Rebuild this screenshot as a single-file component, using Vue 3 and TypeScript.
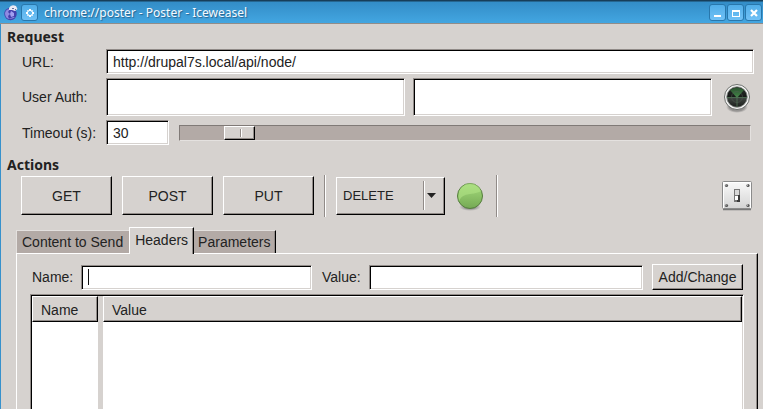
<script setup lang="ts">
import { ref } from 'vue'

const url = ref('http://drupal7s.local/api/node/')
const user = ref('')
const password = ref('')
const timeout = ref(30)
const method = ref('DELETE')
const headerName = ref('')
const headerValue = ref('')
const activeTab = ref('Headers')

const actions: string[] = ['GET', 'POST', 'PUT']
const tabs: string[] = ['Content to Send', 'Headers', 'Parameters']
</script>

<template>
  <div class="window">
    <header class="titlebar">
      <svg class="app-icon" width="14" height="16" viewBox="0 0 14 16" aria-hidden="true">
        <circle cx="6.5" cy="9" r="6.200" fill="#4440ac" />
        <path d="M1 8Q2 4 6 4L4 7L6 9L4 11L5 14Q1 13 1 8Z" fill="#8f8be2" />
        <path d="M7 6L10 8L10 11L7 12L6 9Z" fill="#a29ff0" />
        <path d="M4 13Q8 15 11 12L9 12L7 13Z" fill="#8985df" />
        <path d="M5 3Q7-1 12 1L13.500 4L11 6L8 5L5 5Z" fill="#e9eaf5" />
        <path d="M8 3h2v1H8zM11 4h1v1h-1z" fill="#65729c" />
      </svg>
      <button class="win-btn" aria-label="Window menu">
        <svg width="14" height="14" viewBox="0 0 14 14"><path d="M6 3h2v2H6zM6 9h2v2H6zM3 6h2v2H3zM9 6h2v2H9z" fill="#fff" /><path d="M4 4h2v2H4zM8 4h2v2H8zM4 8h2v2H4zM8 8h2v2H8z" fill="#fff" opacity=".7" /></svg>
      </button>
      <h1 class="title">chrome://poster - Poster - Iceweasel</h1>
      <div class="win-controls">
        <button class="win-btn" aria-label="Minimize">
          <svg width="14" height="14" viewBox="0 0 14 14"><path d="M3 9h7v2H3z" fill="#fff" /></svg>
        </button>
        <button class="win-btn" aria-label="Maximize">
          <svg width="14" height="14" viewBox="0 0 14 14"><path d="M3 4h8v7H3zM4 6v4h6V6z" fill="#fff" fill-rule="evenodd" /></svg>
        </button>
        <button class="win-btn" aria-label="Close">
          <svg width="14" height="14" viewBox="0 0 14 14"><path d="M4 4L10 10M10 4L4 10" stroke="#fff" stroke-width="2.2" /></svg>
        </button>
      </div>
    </header>

    <main class="content">
      <h2 class="heading">Request</h2>
      <form class="request" @submit.prevent>
        <div class="row url-row">
          <label class="label" for="url">URL:</label>
          <input id="url" v-model="url" class="field grow" type="text" />
        </div>
        <div class="row auth-row">
          <label class="label" for="user">User Auth:</label>
          <input id="user" v-model="user" class="field grow" type="text" />
          <input v-model="password" class="field grow" type="password" aria-label="Password" />
          <button class="icon-btn" type="button" aria-label="Fetch login">
            <svg width="32" height="34" viewBox="0 0 32 34">
              <defs>
                <radialGradient id="shade"><stop offset=".7" stop-color="#555" stop-opacity=".5" /><stop offset="1" stop-color="#777" stop-opacity="0" /></radialGradient>
                <linearGradient id="dial" x2="0" y2="1"><stop offset="0" stop-color="#2b302c" /><stop offset=".5" stop-color="#161917" /><stop offset=".55" stop-color="#3f4541" /><stop offset="1" stop-color="#1b1e1c" /></linearGradient>
                <linearGradient id="beam" x2="0" y2="1"><stop offset="0" stop-color="#2c5230" /><stop offset="1" stop-color="#438a48" /></linearGradient>
              </defs>
              <ellipse cx="16" cy="27" rx="11" ry="6" fill="url(#shade)" />
              <circle cx="16" cy="17" r="12.5" fill="#f5f5f5" stroke="#6d706d" />
              <circle cx="16" cy="17" r="10.3" fill="url(#dial)" stroke="#8b8f8b" stroke-width=".8" />
              <path d="M16 18L9 10Q16 5 23 10Z" fill="url(#beam)" />
              <path d="M6 17.500H26M16 15V27" stroke="#527858" opacity=".8" />
              <circle cx="16" cy="17" r="5.500" fill="none" stroke="#526155" stroke-width=".5" />
            </svg>
          </button>
        </div>
        <div class="row time-row">
          <label class="label" for="timeout">Timeout (s):</label>
          <input id="timeout" v-model.number="timeout" class="field timeout" type="text" />
          <input v-model.number="timeout" class="slider" type="range" min="1" max="360" aria-label="Timeout" />
        </div>
      </form>

      <h2 class="heading actions-heading">Actions</h2>
      <div class="toolbar">
        <button v-for="action in actions" :key="action" class="raised action">{{ action }}</button>
        <span class="separator"></span>
        <div class="method">
          <select v-model="method" class="raised method-select" aria-label="Method">
            <option>DELETE</option>
          </select>
          <span class="method-arrow" aria-hidden="true">
            <svg width="9" height="5" viewBox="0 0 9 5"><path d="M0 0H9L4.500 5Z" fill="#222" /></svg>
          </span>
        </div>
        <button class="icon-btn go" aria-label="Submit">
          <svg width="28" height="30" viewBox="0 0 28 30">
            <defs>
              <linearGradient id="green" x2="0" y2="1"><stop offset="0" stop-color="#a5dc7c" /><stop offset="1" stop-color="#75a954" /></linearGradient>
              <radialGradient id="drop"><stop offset=".5" stop-color="#666" stop-opacity=".6" /><stop offset="1" stop-color="#888" stop-opacity="0" /></radialGradient>
            </defs>
            <ellipse cx="14" cy="26" rx="11" ry="4" fill="url(#drop)" />
            <circle cx="14" cy="15" r="12.500" fill="url(#green)" stroke="#557d3d" />
            <path d="M3 20Q5 14 14 13Q22 12 25 10A11.500 11.500 0 0 0 3 11Q2 16 3 20Z" fill="#b0e386" opacity=".6" />
          </svg>
        </button>
        <span class="separator"></span>
        <button class="icon-btn settings" aria-label="Settings">
          <svg width="30" height="30" viewBox="0 0 30 30">
            <defs>
              <linearGradient id="plate" x2="0" y2="1"><stop offset="0" stop-color="#fafafa" /><stop offset="1" stop-color="#d4d4d4" /></linearGradient>
            </defs>
            <path d="M1 28.500H29" stroke="#777" stroke-width="1.500" />
            <rect x=".5" y=".5" width="29" height="27" rx="1" fill="url(#plate)" stroke="#8b8b8b" />
            <path d="M1.500 27V1.500H28.500V27" fill="none" stroke="#fff" />
            <g fill="#555"><circle cx="4.500" cy="4.500" r="1.600" /><circle cx="26" cy="4.500" r="1.600" /><circle cx="4.500" cy="24.500" r="1.600" /><circle cx="26" cy="24.500" r="1.600" /></g>
            <g fill="#fff"><circle cx="4" cy="4" r=".6" /><circle cx="25.500" cy="4" r=".6" /><circle cx="4" cy="24" r=".6" /><circle cx="25.500" cy="24" r=".6" /></g>
            <path d="M12 8H18V21H12Z" fill="#777" />
            <path d="M13 9H17V14H13Z" fill="#d8d8d8" />
            <path d="M13 15H16V19H13Z" fill="#fff" />
            <path d="M16 14H18V21H15V19H16Z" fill="#3a3a3a" />
          </svg>
        </button>
      </div>

      <div class="tabs" role="tablist">
        <button
          v-for="tab in tabs"
          :key="tab"
          class="tab"
          :class="{ active: tab === activeTab }"
          role="tab"
          :aria-selected="tab === activeTab"
          @click="activeTab = tab"
        >{{ tab }}</button>
      </div>
      <section class="panel">
        <form class="header-form" @submit.prevent>
          <label for="header-name">Name:</label>
          <input id="header-name" v-model="headerName" class="field name-field" :class="{ empty: !headerName }" type="text" />
          <label class="value-label" for="header-value">Value:</label>
          <input id="header-value" v-model="headerValue" class="field value-field" type="text" />
          <button class="raised add" type="submit">Add/Change</button>
        </form>
        <div class="list">
          <table class="grid">
            <thead>
              <tr>
                <th class="name-col" scope="col"><span class="raised cell">Name</span></th>
                <th class="gap-col" aria-hidden="true"></th>
                <th scope="col"><span class="raised cell">Value</span></th>
              </tr>
            </thead>
            <tbody>
              <tr><td></td><td class="gap-col"></td><td></td></tr>
            </tbody>
          </table>
        </div>
      </section>
    </main>
  </div>
</template>

<style>
html, body, #app { height: 100%; }
body { margin: 0; overflow: hidden; background: #d6d2cf; }
</style>

<style scoped>
* { box-sizing: border-box; }
.window {
  display: flex;
  flex-direction: column;
  min-height: 100%;
  background: #d6d2cf;
  color: #222;
  font: 14px/18px "Liberation Sans", sans-serif;
}
button, input, select { font: inherit; color: inherit; margin: 0; min-width: 0; border-radius: 0; outline: none; }
button { padding: 0; }
.titlebar {
  display: flex;
  align-items: center;
  height: 24px;
  padding: 2px 1px 0 4px;
  background: linear-gradient(#173e59 0, #173e59 1px, #338dc7 2px, #43a6e1 100%);
  border-bottom: 1px solid #918d8a;
}
.app-icon { margin-right: 3px; }
.titlebar .win-btn {
  display: flex;
  align-items: center;
  justify-content: center;
  width: 17px;
  height: 17px;
  border: 1px solid #2877ac;
  border-radius: 3px;
  background: linear-gradient(#51aee8, #70c1f6);
}
.win-btn svg { flex: none; }
.title {
  flex: 1;
  margin: 0 0 0 6px;
  color: #f4faff;
  font: 12px/18px "Noto Sans", sans-serif;
  text-shadow: 1px 1px 1px #28628c;
}
.win-controls { display: flex; gap: 1px; }
.content {
  flex: 1;
  display: flex;
  flex-direction: column;
  padding: 4px 5px 0 6px;
  border-left: 1px solid #3791cc;
}
.heading { margin: 0; font: bold 14px/18px "Noto Sans", sans-serif; }
.request { display: flex; flex-direction: column; gap: 4px; padding: 3px 4px 0 15px; }
.row { display: flex; align-items: center; }
.label { flex: 0 0 84px; }
.field {
  height: 25px;
  padding: 0 6px;
  border: 1px solid;
  border-color: #918b88 #fff #fff #918b88;
  background: #fff;
  box-shadow: inset 1px 1px #000, inset -1px -1px #d6d2cf;
}
.grow { flex: 1; }
.auth-row .field { height: 38px; margin-right: 8px; }
.icon-btn { display: flex; border: 0; background: none; }
.auth-row .icon-btn { height: 34px; margin: 0 1px; }
.timeout { width: 63px; }
.slider {
  flex: 1;
  height: 16px;
  margin: 0 3px 0 10px;
  appearance: none;
  border: 1px solid;
  border-color: #807a77 #e4e1df #e4e1df #807a77;
  background: #b3aaa6;
}
.slider::-webkit-slider-thumb {
  appearance: none;
  width: 31px;
  height: 14px;
  border: 1px solid;
  border-color: #fff #000 #000 #fff;
  background: linear-gradient(#fff, #fff) 16px 2px / 1px 8px no-repeat, linear-gradient(#918b88, #918b88) 15px 2px / 1px 8px no-repeat, #d6d2cf;
  box-shadow: inset -1px -1px #918b88;
}
.actions-heading { margin-top: 11px; }
.toolbar { display: flex; align-items: center; gap: 10px; height: 43px; padding: 0 6px 0 14px; }
.raised {
  border: 1px solid;
  border-color: #fff #000 #000 #fff;
  background: #d6d2cf;
  box-shadow: inset -1px -1px #918b88;
}
.action { width: 91px; height: 39px; }
.separator { width: 2px; height: 42px; border-left: 1px solid #918b88; border-right: 1px solid #fff; }
.method { display: grid; align-items: center; width: 109px; }
.method-select { grid-area: 1 / 1; appearance: none; height: 38px; padding: 0 6px; font-size: 13px; }
.method-arrow {
  grid-area: 1 / 1;
  display: flex;
  align-items: center;
  justify-self: end;
  width: 22px;
  height: 29px;
  padding-left: 3px;
  border-left: 1px solid #918b88;
  box-shadow: inset 1px 0 #fff;
  pointer-events: none;
}
.go { margin: 0 2px 0 1px; }
.settings { margin-left: auto; }
.tabs { display: flex; align-items: flex-end; height: 26px; margin: 10px 0 0 9px; }
.tab {
  height: 23px;
  padding: 0 5px;
  border: 1px solid;
  border-color: #e4e1df #000 transparent #e4e1df;
  border-bottom: 0;
  background: #b3aaa6;
}
.tab:first-child { padding-right: 6px; border-right: 0; }
.tab:last-child { padding-left: 4px; border-left: 0; box-shadow: inset -1px 0 #918b88; }
.tab.active {
  z-index: 1;
  height: 27px;
  margin-bottom: -1px;
  padding-bottom: 2px;
  border-color: #fff #000 transparent #fff;
  background: #d6d2cf;
  box-shadow: inset -1px 0 #918b88;
}
.panel {
  flex: 1;
  display: flex;
  flex-direction: column;
  margin-left: 9px;
  padding: 10px 13px 0;
  border: 1px solid;
  border-color: #fff #000 transparent #fff;
  border-bottom: 0;
  box-shadow: inset -1px 0 #918b88;
}
.header-form { display: flex; align-items: center; padding: 0 1px 0 2px; }
.name-field { flex: 229 1 0; margin-left: 8px; }
.name-field.empty { background: linear-gradient(#111, #111) 6px 3px / 1px 16px no-repeat, #fff; }
.value-label { margin-left: 10px; }
.value-field { flex: 275 1 0; margin-left: 8px; }
.add { width: 91px; height: 26px; margin-left: 9px; }
.list {
  flex: 1;
  display: flex;
  min-height: 100px;
  margin-top: 4px;
  padding: 1px 1px 0;
  border: 1px solid;
  border-color: #918b88 #fff transparent #918b88;
  border-bottom: 0;
  background: #fff;
  box-shadow: inset 1px 1px #000, inset -1px 0 #d6d2cf;
}
.grid { width: 100%; border-collapse: collapse; table-layout: fixed; }
.grid th, .grid td { padding: 0; }
.grid th { height: 26px; font-weight: normal; text-align: left; }
.name-col { width: 66px; }
.grid .gap-col { width: 5px; background: #d6d2cf; }
.cell { display: block; height: 26px; padding: 4px 8px; }
</style>
